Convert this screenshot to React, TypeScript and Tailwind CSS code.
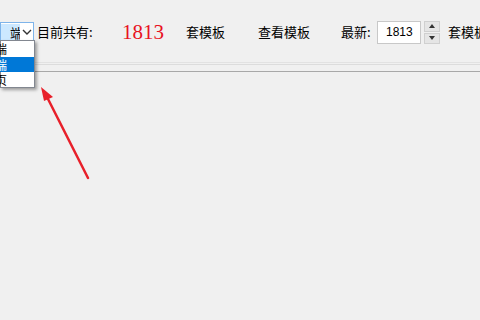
import React from 'react';

const cjk = { fontFamily: '"Noto Sans CJK SC", "Noto Sans", sans-serif' };

const App = () => {
  return (
    <div className="relative w-[480px] h-[320px] overflow-hidden bg-[#f0f0f0] text-[13px] text-black" style={cjk}>
      {/* toolbar */}
      <div className="flex items-center h-[26px] mt-[19px] whitespace-nowrap [&>*]:shrink-0">
        <div className="flex items-center w-[34px] h-[20px] border border-[#7eb4ea] bg-white">
          <div className="w-[19px] h-[16px] bg-[#cce8ff] overflow-hidden flex items-center justify-end text-[13px] leading-none">
            <span className="-mr-[3px]">端</span>
          </div>
          <svg width="12" height="12" viewBox="0 0 12 12" className="ml-[1px]">
            <path d="M2 4 L6 8 L10 4" fill="none" stroke="#333" strokeWidth="1.4" />
          </svg>
        </div>
        <span className="ml-[3px] w-[60px]">目前共有:</span>
        <span
          className="ml-[25px] w-[43px] text-[21px] text-[#e8131f] leading-none"
          style={{ fontFamily: '"Liberation Serif", serif' }}
        >
          1813
        </span>
        <span className="ml-[21px] w-[41px]">套模板</span>
        <span className="ml-[31px] w-[54px]">查看模板</span>
        <span className="ml-[29px] w-[36px]">最新:</span>
        <div
          className="w-[44px] h-[23px] bg-white border border-[#c8c8c8] flex items-center pl-[8px] text-[12px]"
          style={{ fontFamily: '"Liberation Sans", sans-serif' }}
        >
          1813
        </div>
        <div className="ml-[3px] w-[16px] h-[23px] flex flex-col gap-[1px]">
          <div className="flex-1 bg-[#e5e5e5] border border-[#d0d0d0] flex items-center justify-center">
            <svg width="6" height="4" viewBox="0 0 6 4"><path d="M0 4 L3 0 L6 4 Z" fill="#333" /></svg>
          </div>
          <div className="flex-1 bg-[#e5e5e5] border border-[#d0d0d0] flex items-center justify-center">
            <svg width="6" height="4" viewBox="0 0 6 4"><path d="M0 0 L3 4 L6 0 Z" fill="#333" /></svg>
          </div>
        </div>
        <span className="ml-[8px]">套模板</span>
      </div>

      {/* separator lines */}
      <div className="mt-[17px] h-[1px] bg-[#e2e2e2]" />
      <div className="mt-[1px] h-[1px] bg-[#dcdcdc]" />
      <div className="mt-[6px] h-[1px] bg-[#a8a8a8]" />

      {/* open dropdown list */}
      <div className="absolute left-0 top-[40px] w-[35px] h-[48px] bg-white border border-[#828790] shadow-[2px_2px_3px_rgba(0,0,0,0.35)] text-[12px] leading-none">
        <div className="h-[16px] flex items-center -ml-[6px] overflow-hidden">端</div>
        <div className="h-[15px] flex items-center bg-[#0078d7] text-white -ml-[6px] overflow-hidden">端</div>
        <div className="h-[15px] flex items-center -ml-[6px] overflow-hidden">页</div>
      </div>

      {/* red arrow */}
      <svg className="absolute left-0 top-0" width="480" height="320" viewBox="0 0 480 320">
        <line x1="88" y1="178" x2="47" y2="97" stroke="#e8202a" strokeWidth="2.5" strokeLinecap="round" />
        <path d="M41 87 L53 97 L44 101 Z" fill="#e8202a" />
      </svg>
    </div>
  );
};

export default App;
